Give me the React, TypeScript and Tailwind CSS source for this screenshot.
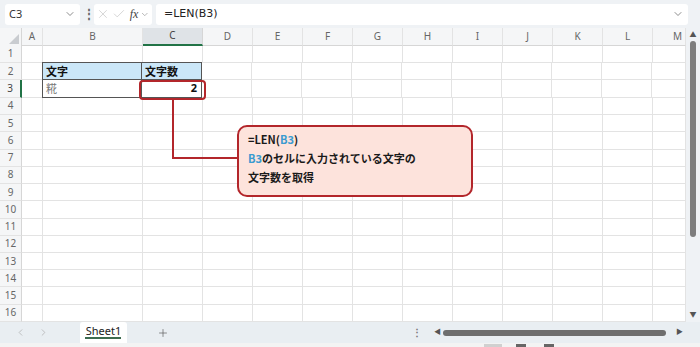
import { ChevronDown, ChevronLeft, ChevronRight, X, Check, Plus } from 'lucide-react'

const COLS = [
  { key: 'A', w: 'w-[21px]' },
  { key: 'B', w: 'w-[100px]' },
  { key: 'C', w: 'w-[60px]' },
  { key: 'D', w: 'w-[50px]' },
  { key: 'E', w: 'w-[50px]' },
  { key: 'F', w: 'w-[50px]' },
  { key: 'G', w: 'w-[50px]' },
  { key: 'H', w: 'w-[50px]' },
  { key: 'I', w: 'w-[50px]' },
  { key: 'J', w: 'w-[50px]' },
  { key: 'K', w: 'w-[50px]' },
  { key: 'L', w: 'w-[50px]' },
  { key: 'M', w: 'flex-1' },
]

const ROWS = Array.from({ length: 16 }, (_, i) => i + 1)

const UI = { fontFamily: '"Noto Sans", "Noto Sans CJK JP", sans-serif' }
const JP = { fontFamily: '"Noto Sans CJK JP", sans-serif' }

function Cell({ row, col }: { row: number; col: string }) {
  // table B2:C3
  if (row === 2 && col === 'B')
    return <span className="pl-[3px] text-[11px] font-bold text-[#111]" style={JP}>文字</span>
  if (row === 2 && col === 'C')
    return <span className="pl-[3px] text-[11px] font-bold text-[#111]" style={JP}>文字数</span>
  if (row === 3 && col === 'B')
    return <span className="pl-[3px] text-[11px] text-[#777]" style={JP}>糀</span>
  if (row === 3 && col === 'C')
    return <span className="ml-auto pr-[4px] text-[11px] font-bold text-[#111]" style={UI}>2</span>
  return null
}

function cellClass(row: number, col: string) {
  const inTable = (row === 2 || row === 3) && (col === 'B' || col === 'C')
  if (inTable) {
    return [
      'border-[#555] border-r border-b',
      row === 2 ? 'bg-[#cbe7f8]' : 'bg-white',
      col === 'B' ? 'border-l -ml-px' : '',
      row === 2 ? 'border-t -mt-px' : '',
    ].join(' ')
  }
  return 'border-r border-b border-[#e3e3e3]'
}

export default function App() {
  return (
    <div className="relative flex h-[347px] w-[700px] flex-col overflow-hidden bg-[#eff2f5]" style={UI}>
      {/* Formula bar */}
      <div className="flex h-[28px] items-center gap-[3px] pl-[5px] pr-[12px]">
        <div className="flex h-[21px] w-[75px] items-center justify-between rounded-[3px] bg-white pl-[4px] pr-[4px]">
          <span className="text-[11px] text-[#333]">C3</span>
          <ChevronDown className="h-3 w-3 text-[#666]" strokeWidth={1.5} />
        </div>
        <span className="w-[8px] text-center text-[12px] font-bold leading-none text-[#666]">⋮</span>
        <div className="flex h-[21px] w-[58px] items-center gap-[2px] rounded-[3px] bg-white px-[2px]">
          <X className="h-[16px] w-[16px] text-[#c4c4c4]" strokeWidth={1.2} />
          <Check className="h-[16px] w-[16px] text-[#c4c4c4]" strokeWidth={1.2} />
          <span className="ml-[2px] text-[12px] italic text-[#444]" style={{ fontFamily: '"Liberation Serif", serif' }}>
            fx
          </span>
          <ChevronDown className="h-[11px] w-[11px] text-[#888]" strokeWidth={1.5} />
        </div>
        <div className="ml-[1px] flex h-[21px] flex-1 items-center justify-between rounded-[3px] bg-white pl-[8px] pr-[4px]">
          <span className="text-[11px] text-[#222]" style={{ fontFamily: '"DejaVu Sans", sans-serif' }}>
            =LEN(B3)
          </span>
          <ChevronDown className="h-3 w-3 text-[#666]" strokeWidth={1.5} />
        </div>
      </div>

      {/* Sheet area */}
      <div className="flex h-[294px]">
        <div className="flex flex-1 flex-col bg-white">
          {/* Column headers */}
          <div className="flex h-[18px] bg-[#f5f6f7]">
            <div className="relative w-[22px] border-r border-[#d6d6d6]">
              <div
                className="absolute bottom-[2px] right-[2px] h-0 w-0 border-b-[10px] border-l-[10px] border-b-[#c9ccd0] border-l-transparent"
              />
            </div>
            {COLS.map((c) => (
              <div
                key={c.key}
                className={`${c.w} flex items-center justify-center border-r text-[10px] ${
                  c.key === 'C'
                    ? 'border-b-2 border-r-[#d6d6d6] border-b-[#217346] bg-[#dfe3e7] text-[#444]'
                    : 'border-b border-r-[#e3e3e3] border-b-[#d6d6d6] text-[#666]'
                } ${c.key === 'M' ? 'justify-end pr-[3px]' : ''}`}
              >
                {c.key}
              </div>
            ))}
          </div>

          {/* Rows */}
          {ROWS.map((r) => (
            <div key={r} className="flex h-[17.4px]">
              <div
                className={`flex w-[22px] items-center justify-center border-b border-[#e3e3e3] bg-[#f5f6f7] text-[10px] ${
                  r === 3 ? 'border-r-2 border-r-[#217346] bg-[#e6e9ec] text-[#444]' : 'border-r border-r-[#d6d6d6] text-[#666]'
                }`}
              >
                {r}
              </div>
              {COLS.map((c) => (
                <div key={c.key} className={`${c.w} flex items-center ${cellClass(r, c.key)}`}>
                  <Cell row={r} col={c.key} />
                </div>
              ))}
            </div>
          ))}
        </div>

        {/* Vertical scrollbar */}
        <div className="flex w-[14px] flex-col items-center bg-[#eff2f5] pt-[3px]">
          <span className="text-[7px] leading-none text-[#555]">▲</span>
          <div className="mt-[3px] h-[196px] w-[6px] rounded-full bg-[#7d7d7d]" />
          <div className="flex-1" />
          <span className="mb-[4px] text-[7px] leading-none text-[#555]">▼</span>
        </div>
      </div>

      {/* Sheet tabs */}
      <div className="flex h-[21px] items-stretch bg-[#e9eef2]">
        <div className="flex w-[80px] items-center gap-[12px] pl-[15px]">
          <ChevronLeft className="h-[11px] w-[11px] text-[#aaa]" strokeWidth={1.5} />
          <ChevronRight className="h-[11px] w-[11px] text-[#aaa]" strokeWidth={1.5} />
        </div>
        <div className="relative flex w-[47px] items-center justify-center rounded-t-[3px] bg-white pb-[2px]">
          <span className="text-[11px] text-[#222]">Sheet1</span>
          <div className="absolute bottom-[4px] left-[5px] right-[6px] h-[2px] bg-[#3d6b4f]" />
        </div>
        <div className="flex w-[72px] items-center justify-center">
          <Plus className="h-[12px] w-[12px] text-[#555]" strokeWidth={1.3} />
        </div>
        <div className="flex-1" />
        <div className="flex items-center pr-[17px]">
          <span className="mr-[12px] text-[10px] font-bold text-[#777]">⋮</span>
          <span className="mr-[2px] text-[7px] text-[#555]">◀</span>
          <div className="h-[6px] w-[223px] rounded-full bg-[#6e6e6e]" />
          <span className="ml-[10px] text-[7px] text-[#555]">▶</span>
        </div>
      </div>

      {/* Status bar */}
      <div className="flex h-[4px] items-start bg-[#f3f3f3]">
        <div className="ml-[484px] mt-[1px] h-[3px] w-[18px] bg-[#d0d0d0]" />
        <div className="ml-[14px] mt-[1px] h-[3px] w-[10px] bg-[#666]" />
        <div className="ml-[18px] mt-[1px] h-[3px] w-[10px] bg-[#666]" />
      </div>

      {/* Highlight on C3 */}
      <div className="absolute left-[139px] top-[80px] h-[20px] w-[67px] rounded-[4px] border-2 border-[#b3262b]" />

      {/* Connector */}
      <div className="absolute left-[172px] top-[100px] h-[58px] w-[2px] bg-[#b3262b]" />
      <div className="absolute left-[172px] top-[157px] h-[2px] w-[66px] bg-[#b3262b]" />

      {/* Callout */}
      <div
        className="absolute left-[237px] top-[125px] flex h-[72px] w-[236px] flex-col rounded-[10px] border-2 border-[#b3262b] bg-[#fde3dc] pl-[9px] pt-[3px] text-[#1a1a1a]"
        style={JP}
      >
        <div className="h-[19px] text-[11px] font-bold leading-[19px]">
          =LEN(<span className="text-[#3b9bd0]">B3</span>)
        </div>
        <div className="h-[19px] text-[11px] font-bold leading-[19px]">
          <span className="text-[#3b9bd0]">B3</span>のセルに入力されている文字の
        </div>
        <div className="h-[19px] text-[11px] font-bold leading-[19px]">文字数を取得</div>
      </div>
    </div>
  )
}
